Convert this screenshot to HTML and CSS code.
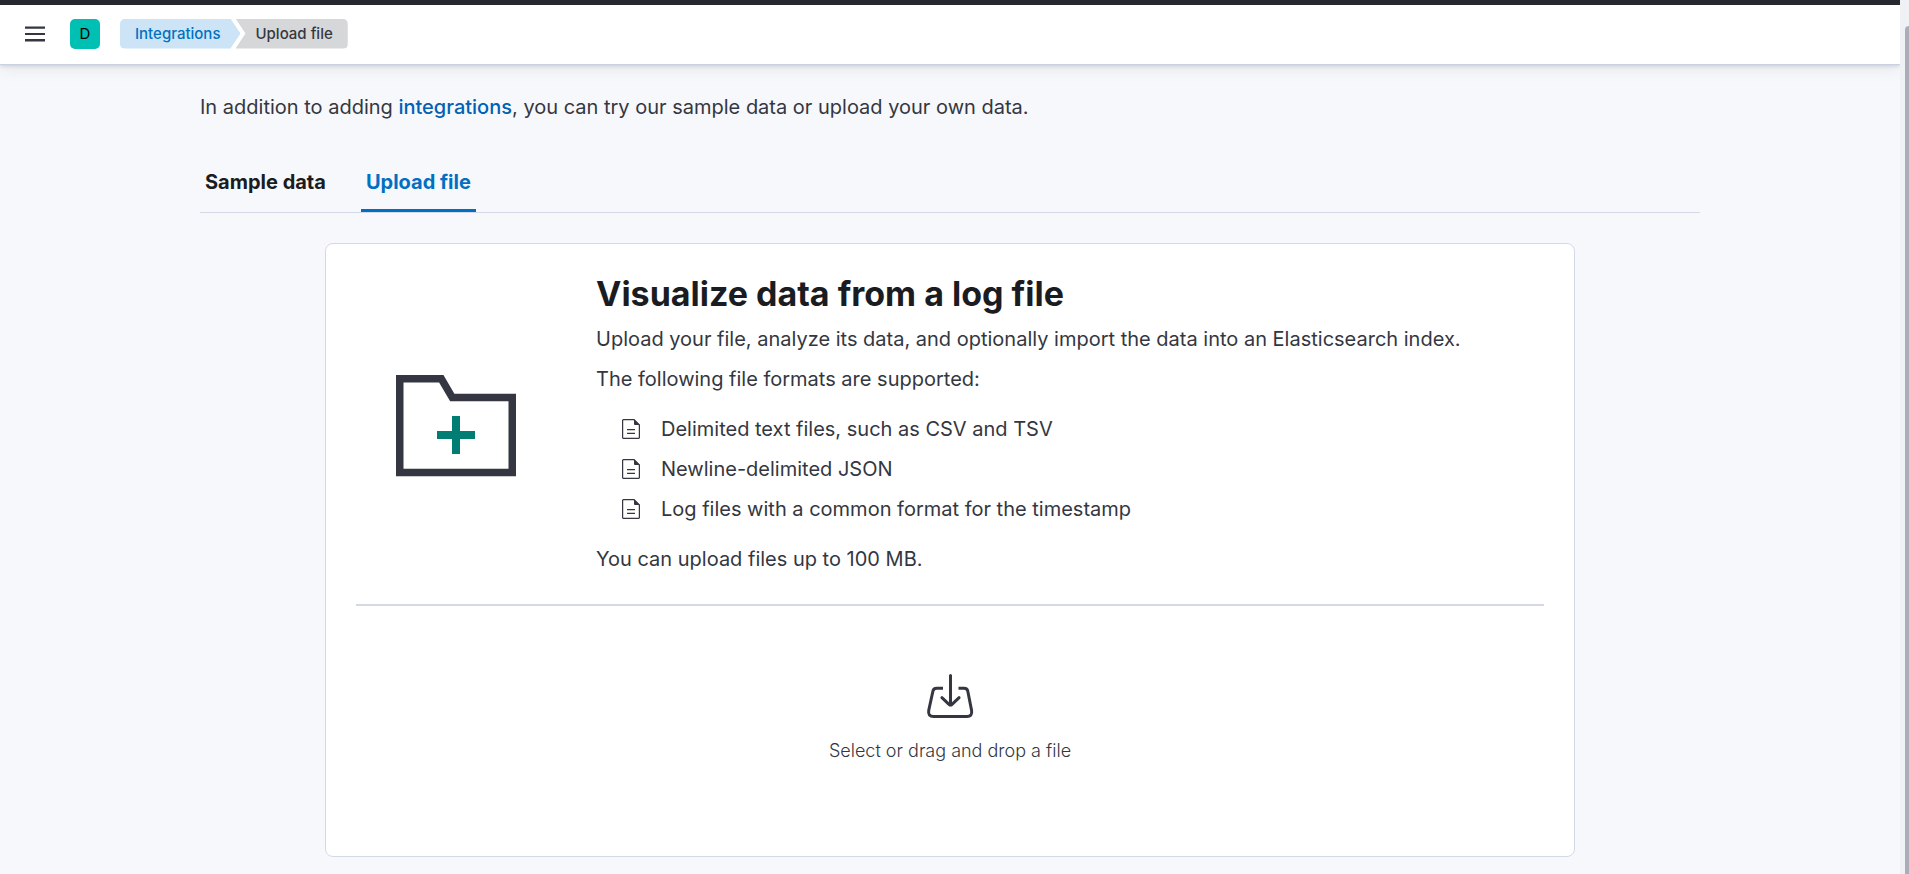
FILE: index.html
```html
<!DOCTYPE html>
<html lang="en">
<head>
<meta charset="utf-8">
<meta name="viewport" content="width=device-width, initial-scale=1">
<title>Upload file</title>
<link rel="stylesheet" href="styles.css">
</head>
<body>
<div class="shell">
  <div class="app">
    <header class="header">
      <button class="menu-button" type="button" aria-label="Toggle primary navigation">
        <svg width="20" height="16" viewBox="0 0 20 16" aria-hidden="true"><path d="M0 .4h20v2.400H0zM0 7h20v2H0zM0 13h20v2.400H0z"/></svg>
      </button>
      <button class="space-avatar" type="button" aria-label="Default space">D</button>
      <nav class="breadcrumbs" aria-label="Breadcrumbs">
        <a class="crumb crumb-link" href="#integrations">Integrations</a>
        <span class="crumb crumb-current" aria-current="page">Upload file</span>
      </nav>
    </header>
    <main class="content">
      <p class="intro">In addition to adding <a class="intro-link" href="#integrations">integrations</a>, you can try our sample data or upload your own data.</p>
      <div class="tabs" role="tablist">
        <button class="tab" type="button" role="tab" aria-selected="false">Sample data</button>
        <button class="tab tab-selected" type="button" role="tab" aria-selected="true">Upload file</button>
      </div>
      <section class="panel">
        <div class="about">
          <div class="about-icon">
            <svg width="120" height="102" viewBox="0 0 120 102" aria-hidden="true">
              <path fill="none" stroke="#343741" stroke-width="7.500" d="M3.750 3.750H45.300L56.300 22.600H116.250V97.500H3.750z"/>
              <path fill="#017d73" d="M56 41h8v15h15v8H64v15h-8V64H41v-8h15z"/>
            </svg>
          </div>
          <div class="about-text">
            <h1 class="title">Visualize data from a log file</h1>
            <p class="text">Upload your file, analyze its data, and optionally import the data into an Elasticsearch index.</p>
            <p class="text">The following file formats are supported:</p>
            <ul class="formats">
              <li class="format"><svg class="format-icon" width="18" height="20" viewBox="0 0 18 20" aria-hidden="true"><path fill="none" stroke="#343741" stroke-width="1.250" d="M12 .6H1.600a1 1 0 0 0-1 1v16.800a1 1 0 0 0 1 1h14.800a1 1 0 0 0 1-1V6z"/><path fill="#343741" d="M12 .2 17.900 6H13a1 1 0 0 1-1-1zM5 10h8v1.250H5zM5 13.700h8V15H5z"/></svg>Delimited text files, such as CSV and TSV</li>
              <li class="format"><svg class="format-icon" width="18" height="20" viewBox="0 0 18 20" aria-hidden="true"><path fill="none" stroke="#343741" stroke-width="1.250" d="M12 .6H1.600a1 1 0 0 0-1 1v16.800a1 1 0 0 0 1 1h14.800a1 1 0 0 0 1-1V6z"/><path fill="#343741" d="M12 .2 17.900 6H13a1 1 0 0 1-1-1zM5 10h8v1.250H5zM5 13.700h8V15H5z"/></svg>Newline-delimited JSON</li>
              <li class="format"><svg class="format-icon" width="18" height="20" viewBox="0 0 18 20" aria-hidden="true"><path fill="none" stroke="#343741" stroke-width="1.250" d="M12 .6H1.600a1 1 0 0 0-1 1v16.800a1 1 0 0 0 1 1h14.800a1 1 0 0 0 1-1V6z"/><path fill="#343741" d="M12 .2 17.900 6H13a1 1 0 0 1-1-1zM5 10h8v1.250H5zM5 13.700h8V15H5z"/></svg>Log files with a common format for the timestamp</li>
            </ul>
            <p class="text">You can upload files up to 100 MB.</p>
          </div>
        </div>
        <hr class="divider">
        <label class="picker">
          <input class="picker-input" type="file">
          <svg width="48" height="46" viewBox="0 0 48 46" fill="none" stroke="#343741" stroke-width="3" aria-hidden="true">
            <path d="M17 15.200H10.500Q7.500 15.200 6.900 18.200L2.700 37.500Q1.800 43.500 7.500 43.500H41Q46.500 43.500 45.600 37.500L41.800 18.200Q41.200 15.200 38.200 15.200H32.500"/>
            <path stroke-linecap="round" stroke-linejoin="round" d="M24.500 2.500V31.500M15.900 24.700 23 31.300Q24.500 32.700 26 31.300L33.100 24.700"/>
          </svg>
          <span class="picker-text">Select or drag and drop a file</span>
        </label>
      </section>
    </main>
  </div>
  <div class="scroll-rail" aria-hidden="true"><div class="scroll-thumb"></div></div>
</div>
</body>
</html>
```
FILE: styles.css
```css
* { box-sizing: border-box; }

body {
  margin: 0;
  background: #f7f8fc;
  color: #343741;
  font-family: Inter, "Liberation Sans", sans-serif;
  font-size: 20px;
  line-height: 30px;
  font-weight: 400;
}

button { border: 0; padding: 0; background: none; font: inherit; color: inherit; cursor: pointer; }
p, h1, ul { margin: 0; padding: 0; }

.shell { display: flex; min-height: 100vh; }
.app { flex: 1; min-width: 0; }

.header {
  display: flex;
  align-items: center;
  height: 65px;
  padding: 0 25px 2px;
  border-top: 5px solid #25282f;
  border-bottom: 1px solid #c9d2e2;
  background: #fff;
  box-shadow: 0 1px 4px rgba(0, 0, 0, .14), 0 3px 16px rgba(0, 0, 0, .08);
}
.menu-button { display: flex; fill: #343741; }
.space-avatar {
  width: 30px;
  height: 30px;
  margin: 0 20px 0 25px;
  border-radius: 5px;
  background: #00bfb3;
  color: #000;
  font-size: 15px;
}

.breadcrumbs { display: flex; font-size: 15px; font-weight: 500; }
.crumb { text-decoration: none; }
.crumb-link {
  padding: 0 20px 0 15px;
  border-radius: 5px 0 0 5px;
  background: #cce4f5;
  color: #0071c2;
  clip-path: polygon(0 0, calc(100% - 10px) 0, 100% 50%, calc(100% - 10px) 100%, 0 100%);
}
.crumb-current {
  margin-left: -5px;
  padding: 0 15px 0 20px;
  border-radius: 0 5px 5px 0;
  background: #d6d7d9;
  clip-path: polygon(0 0, 100% 0, 100% 100%, 0 100%, 10px 50%);
}

.content { max-width: 1500px; margin: 0 auto; padding: 27px 0 16px; }
.intro-link { color: #0061b5; font-weight: 500; text-decoration: none; }

.tabs { display: flex; gap: 30px; margin: 30px 0; border-bottom: 1px solid #d3dae6; }
.tab { height: 60px; padding: 0 5px; color: #1a1c21; font-weight: 700; }
.tab-selected { color: #0071c2; box-shadow: inset 0 -3px #0071c2; }

.panel {
  max-width: 1250px;
  margin: 0 auto;
  padding: 30px;
  border: 1px solid #d3dae6;
  border-radius: 8px;
  background: #fff;
}
.about { display: flex; align-items: center; gap: 40px; }
.about-icon { display: flex; flex: 0 0 200px; justify-content: center; padding-top: 3px; }
.title { margin-bottom: 10px; color: #1a1c21; font-size: 34px; line-height: 40px; font-weight: 700; }
.text + .text { margin-top: 10px; }
.formats { display: grid; gap: 10px; margin: 20px 0; padding-left: 26px; list-style: none; }
.format { display: flex; align-items: center; gap: 21px; }
.divider { height: 2px; margin: 30px 0 0; border: 0; background: #d3dae6; }

.picker {
  display: flex;
  flex-direction: column;
  align-items: center;
  gap: 17px;
  height: 220px;
  padding-top: 67px;
  font-size: 18px;
  font-weight: 300;
  cursor: pointer;
}
.picker-input { position: absolute; width: 1px; height: 1px; opacity: 0; }

.scroll-rail { flex: 0 0 9px; padding: 26px 0 0 5px; background: #f0f1f5; }
.scroll-thumb { height: 100%; border-radius: 4px 0 0 0; background: #abadb8; }
```
